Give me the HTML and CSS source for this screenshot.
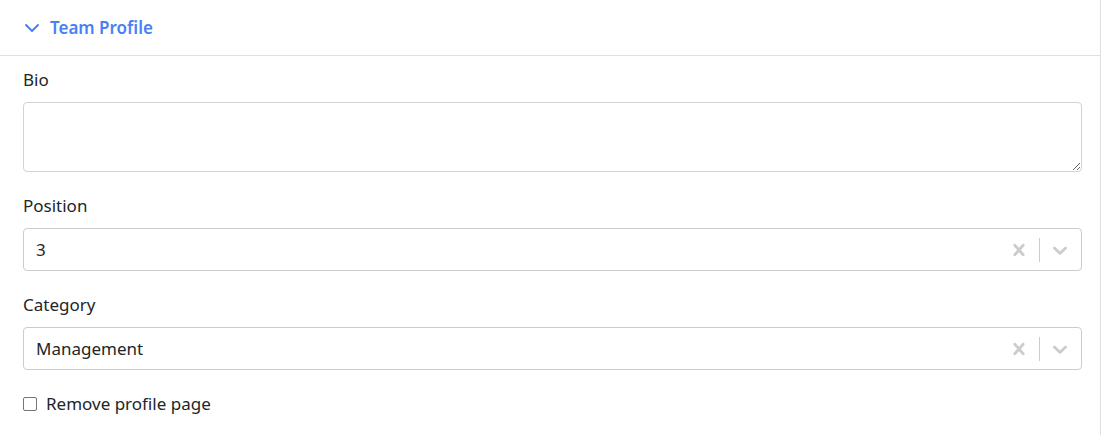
FILE: index.html
```html
<!DOCTYPE html>
<html>
<head>
<meta charset="utf-8">
<link rel="stylesheet" href="styles.css">
</head>
<body>
<div class="panel">
  <div class="panel-header">
    <svg class="chev" width="16" height="16" viewBox="0 0 16 16"><path d="M2 5l6 6 6-6" fill="none" stroke="currentColor" stroke-width="2" stroke-linecap="round" stroke-linejoin="round"/></svg>
    <span class="title">Team Profile</span>
  </div>
  <div class="panel-body">
    <div class="field">
      <label class="label">Bio</label>
      <textarea class="textarea"></textarea>
    </div>
    <div class="field">
      <label class="label">Position</label>
      <div class="select">
        <div class="value">3</div>
        <div class="indicators">
          <svg class="ind" width="24" height="24" viewBox="0 0 20 20"><path fill="currentColor" d="M14.348 14.849c-0.469 0.469-1.229 0.469-1.697 0l-2.651-3.030-2.651 3.029c-0.469 0.469-1.229 0.469-1.697 0-0.469-0.469-0.469-1.229 0-1.697l2.758-3.15-2.759-3.152c-0.469-0.469-0.469-1.228 0-1.697s1.228-0.469 1.697 0l2.652 3.031 2.651-3.031c0.469-0.469 1.228-0.469 1.697 0s0.469 1.229 0 1.697l-2.758 3.152 2.758 3.15c0.469 0.469 0.469 1.229 0 1.698z"/></svg>
          <span class="sep"></span>
          <svg class="ind last" width="24" height="24" viewBox="0 0 20 20"><path fill="currentColor" d="M4.516 7.548c0.436-0.446 1.043-0.481 1.576 0l3.908 3.747 3.908-3.747c0.533-0.481 1.141-0.446 1.574 0 0.436 0.445 0.408 1.197 0 1.615-0.406 0.418-4.695 4.502-4.695 4.502-0.217 0.223-0.502 0.335-0.787 0.335s-0.57-0.112-0.789-0.335c0 0-4.287-4.084-4.695-4.502s-0.436-1.170 0-1.615z"/></svg>
        </div>
      </div>
    </div>
    <div class="field">
      <label class="label">Category</label>
      <div class="select">
        <div class="value">Management</div>
        <div class="indicators">
          <svg class="ind" width="24" height="24" viewBox="0 0 20 20"><path fill="currentColor" d="M14.348 14.849c-0.469 0.469-1.229 0.469-1.697 0l-2.651-3.030-2.651 3.029c-0.469 0.469-1.229 0.469-1.697 0-0.469-0.469-0.469-1.229 0-1.697l2.758-3.15-2.759-3.152c-0.469-0.469-0.469-1.228 0-1.697s1.228-0.469 1.697 0l2.652 3.031 2.651-3.031c0.469-0.469 1.228-0.469 1.697 0s0.469 1.229 0 1.697l-2.758 3.152 2.758 3.15c0.469 0.469 0.469 1.229 0 1.698z"/></svg>
          <span class="sep"></span>
          <svg class="ind last" width="24" height="24" viewBox="0 0 20 20"><path fill="currentColor" d="M4.516 7.548c0.436-0.446 1.043-0.481 1.576 0l3.908 3.747 3.908-3.747c0.533-0.481 1.141-0.446 1.574 0 0.436 0.445 0.408 1.197 0 1.615-0.406 0.418-4.695 4.502-4.695 4.502-0.217 0.223-0.502 0.335-0.787 0.335s-0.57-0.112-0.789-0.335c0 0-4.287-4.084-4.695-4.502s-0.436-1.170 0-1.615z"/></svg>
        </div>
      </div>
    </div>
    <label class="check">
      <span class="box"></span>
      <span>Remove profile page</span>
    </label>
  </div>
</div>
</body>
</html>
```

FILE: styles.css
```css
html, body {
  margin: 0;
  background: #fff;
}
body {
  font-family: "Noto Sans", "Open Sans", sans-serif;
  color: #212529;
  font-size: 17px;
}
.panel {
  width: 1100px;
  height: 435px;
  border-right: 1px solid #dee2e6;
}
.panel-header {
  height: 56px;
  border-bottom: 1px solid #dee2e6;
  display: flex;
  align-items: center;
  padding-left: 24px;
  box-sizing: border-box;
  color: #4a80f5;
}
.chev {
  margin-right: 10px;
}
.title {
  font-size: 17px;
  font-weight: 600;
}
.panel-body {
  padding: 12px 18px 0 23px;
}
.field {
  margin-bottom: 22px;
}
.label {
  display: block;
  line-height: 24px;
  margin-bottom: 10px;
}
.textarea {
  display: block;
  box-sizing: border-box;
  width: 1059px;
  height: 70px;
  border: 1px solid #ced4da;
  border-radius: 4px;
  margin: 0;
  font: inherit;
}
.select {
  box-sizing: border-box;
  width: 1059px;
  height: 43px;
  border: 1px solid #ccc;
  border-radius: 4px;
  display: flex;
  align-items: center;
}
.value {
  flex: 1;
  padding-left: 12px;
}
.indicators {
  display: flex;
  align-items: center;
  color: #ccc;
}
.ind {
  padding: 8px;
}
.ind.last {
  padding-right: 9px;
}
.sep {
  width: 1px;
  height: 24px;
  background: #ccc;
}
.check {
  display: flex;
  align-items: center;
  line-height: 24px;
}
.box {
  width: 12px;
  height: 12px;
  border: 1px solid #767676;
  border-radius: 2px;
  margin: 0 9px 0 0;
}
```
